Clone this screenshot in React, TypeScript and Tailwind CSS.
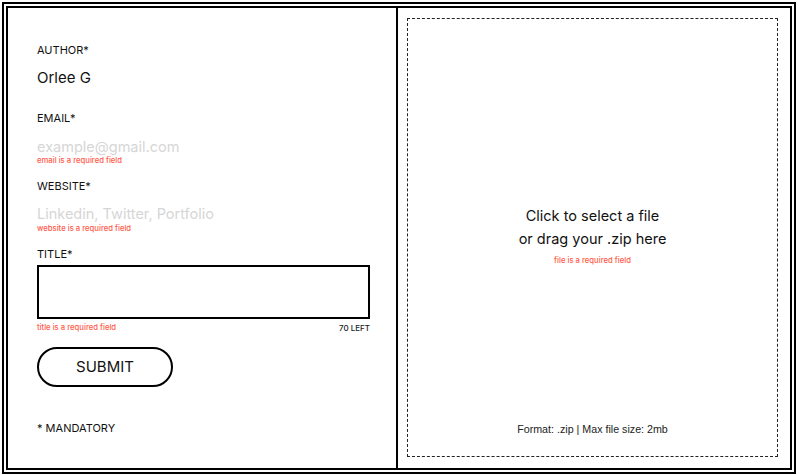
import React from "react";

export default function App() {
  const font = { fontFamily: "Inter, 'Liberation Sans', sans-serif" };
  return (
    <div className="w-[800px] h-[475px] bg-white pt-[2px] pl-[2px]" style={font}>
      <div className="w-[794px] h-[472px] border-2 border-black p-[2px]">
        <div className="w-full h-full border-2 border-black flex">
          {/* Left form */}
          <div className="w-[390px] h-full border-r-2 border-black pl-[29px] flex flex-col text-[#111]">
            <div className="mt-[34px] h-[16px] leading-[16px] text-[11px]">AUTHOR*</div>
            <div className="mt-[10px] h-[20px] leading-[20px] text-[15px]">Orlee G</div>
            <div className="mt-[22px] h-[16px] leading-[16px] text-[11px]">EMAIL*</div>
            <div className="mt-[12px] h-[18px] leading-[18px] text-[14.5px] text-[#d6d6d6]">example@gmail.com</div>
            <div className="h-[10px] leading-[10px] text-[7.7px] font-medium text-[#ff5a4a]">email is a required field</div>
            <div className="mt-[12px] h-[16px] leading-[16px] text-[11px]">WEBSITE*</div>
            <div className="mt-[11px] h-[18px] leading-[18px] text-[14.5px] text-[#d6d6d6]">Linkedin, Twitter, Portfolio</div>
            <div className="mt-[1px] h-[10px] leading-[10px] text-[7.7px] font-medium text-[#ff5a4a]">website is a required field</div>
            <div className="mt-[12px] h-[16px] leading-[16px] text-[11px]">TITLE*</div>
            <div className="mt-[3px] w-[333px] h-[54px] border-2 border-black"></div>
            <div className="mt-[4px] w-[333px] h-[10px] flex justify-between items-center">
              <span className="leading-[10px] text-[7.7px] font-medium text-[#ff5a4a]">title is a required field</span>
              <span className="leading-[10px] text-[8px] font-medium text-[#222]">70 LEFT</span>
            </div>
            <button className="mt-[14px] w-[136px] h-[40px] rounded-full border-2 border-black flex items-center justify-center text-[15px] leading-[20px] text-[#111]">
              SUBMIT
            </button>
            <div className="mt-[33px] h-[16px] leading-[16px] text-[11px]">* MANDATORY</div>
          </div>
          {/* Right drop zone */}
          <div className="flex-1 h-full pl-[9px] pr-[9px] pt-[10px] pb-[10px]">
            <div className="w-[371px] h-[439px] border border-dashed border-[#222] flex flex-col items-center">
              <div className="mt-[185px] flex flex-col items-center text-[#111]">
                <div className="h-[23px] leading-[23px] text-[14.5px]">Click to select a file</div>
                <div className="h-[23px] leading-[23px] text-[14.5px]">or drag your .zip here</div>
                <div className="mt-[6px] h-[10px] leading-[10px] text-[7.7px] font-medium text-[#ff5a4a]">file is a required field</div>
              </div>
              <div
                className="mt-auto mb-[20px] h-[14px] leading-[14px] text-[10.7px] text-[#222]"
                style={{ fontFamily: "'Liberation Sans', Arial, sans-serif" }}
              >
                Format: .zip | Max file size: 2mb
              </div>
            </div>
          </div>
        </div>
      </div>
    </div>
  );
}
